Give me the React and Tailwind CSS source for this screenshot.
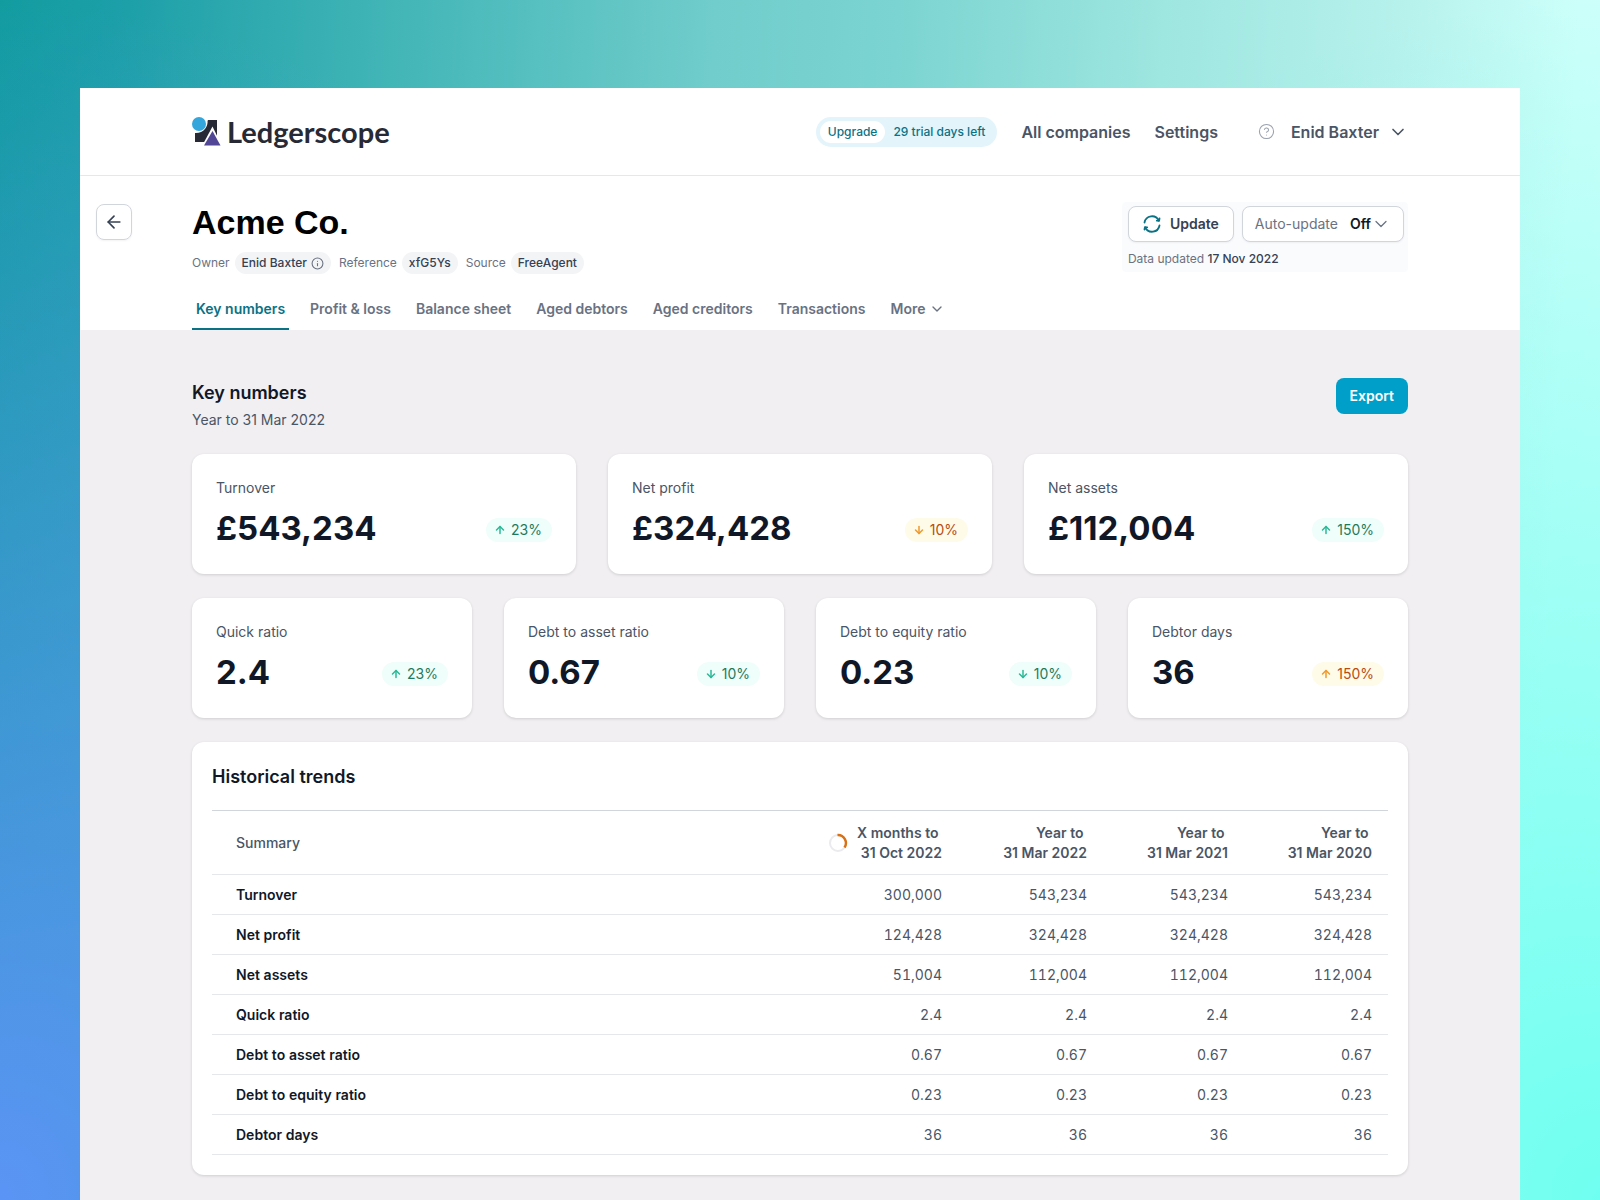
import { ArrowLeft, ArrowUp, ArrowDown, ChevronDown, CircleHelp, Info } from 'lucide-react';

const tabs = ['Key numbers', 'Profit & loss', 'Balance sheet', 'Aged debtors', 'Aged creditors', 'Transactions'];

const mainStats = [
  { label: 'Turnover', value: '£543,234', change: '23%', up: true, good: true },
  { label: 'Net profit', value: '£324,428', change: '10%', up: false, good: false },
  { label: 'Net assets', value: '£112,004', change: '150%', up: true, good: true },
];

const ratioStats = [
  { label: 'Quick ratio', value: '2.4', change: '23%', up: true, good: true },
  { label: 'Debt to asset ratio', value: '0.67', change: '10%', up: false, good: true },
  { label: 'Debt to equity ratio', value: '0.23', change: '10%', up: false, good: true },
  { label: 'Debtor days', value: '36', change: '150%', up: true, good: false },
];

const periods = [
  { date: '31 Mar 2022', width: 'w-[145px]' },
  { date: '31 Mar 2021', width: 'w-[141px]' },
  { date: '31 Mar 2020', width: 'w-40' },
];

const rows = [
  ['Turnover', '300,000', '543,234', '543,234', '543,234'],
  ['Net profit', '124,428', '324,428', '324,428', '324,428'],
  ['Net assets', '51,004', '112,004', '112,004', '112,004'],
  ['Quick ratio', '2.4', '2.4', '2.4', '2.4'],
  ['Debt to asset ratio', '0.67', '0.67', '0.67', '0.67'],
  ['Debt to equity ratio', '0.23', '0.23', '0.23', '0.23'],
  ['Debtor days', '36', '36', '36', '36'],
];

function Logo() {
  return (
    <a href="#" className="flex items-center gap-[6px]">
      <svg width="29" height="30" viewBox="0 0 29 30" aria-hidden="true">
        <path d="M16 3h9v22H3V16z" fill="#272a35" />
        <path d="M2 16C11 17 16.500 10 15.500 3H2z" fill="#fff" />
        <path d="M20.500 9.500 30 29H10z" fill="#fff" />
        <circle cx="7" cy="7" r="7" fill="#35a6dc" />
        <path d="M20.500 14 28.500 28.500h-16.500z" fill="#514796" />
      </svg>
      <span className="font-['Lato',sans-serif] text-[29px] leading-8 font-bold text-[#272a35]">Ledgerscope</span>
    </a>
  );
}

function RefreshIcon() {
  return (
    <svg width="18" height="18" viewBox="0 0 18 18" fill="none" stroke="#0b7285" strokeWidth="1.8" strokeLinecap="round" strokeLinejoin="round" aria-hidden="true">
      <path d="M1.500 7.500A7.600 7.600 0 0 1 15.800 5.500" />
      <path d="M16.500 10.500A7.600 7.600 0 0 1 2.200 12.500" />
      <path d="M13.800 5.600 16.100 5.800 16.500 3.500" />
      <path d="M4.200 12.400 1.900 12.200 1.500 14.500" />
    </svg>
  );
}

function Spinner() {
  return (
    <svg width="20" height="20" viewBox="0 0 20 20" fill="none" strokeWidth="2" aria-hidden="true">
      <circle cx="10" cy="10" r="8" stroke="#ebebee" />
      <path d="M9.500 2A8 8 0 0 1 16.500 14.500" stroke="#d97014" strokeWidth="2.4" />
    </svg>
  );
}

function StatCard({ stat }) {
  const Arrow = stat.up ? ArrowUp : ArrowDown;
  return (
    <div className="rounded-xl bg-white p-6 shadow-[0_1px_3px_rgba(0,0,0,0.14)]">
      <h3 className="text-sm leading-5 text-gray-600">{stat.label}</h3>
      <div className="mt-3 flex items-center justify-between">
        <p className="pb-1 text-[33px] leading-9 font-bold text-gray-900">{stat.value}</p>
        <span
          className={
            stat.good
              ? 'flex h-6 items-center gap-[5px] rounded-full bg-[#effefa] pr-[10px] pl-2 text-sm text-[#1f7a5c]'
              : 'flex h-6 items-center gap-[5px] rounded-full bg-[#fffbe9] pr-[10px] pl-2 text-sm text-[#b84d14]'
          }
        >
          <Arrow size={12} strokeWidth={3} className={stat.good ? 'text-[#2bb997]' : 'text-[#f0992e]'} />
          {stat.change}
        </span>
      </div>
    </div>
  );
}

function MetaItem({ label, children }) {
  return (
    <div className="flex items-center gap-[5px]">
      <dt className="text-gray-500">{label}</dt>
      <dd className="flex h-[22px] items-center gap-1 rounded-full bg-gray-100 px-[7px] font-medium text-gray-700">{children}</dd>
    </div>
  );
}

export default function App() {
  return (
    <div className="min-h-screen bg-[radial-gradient(60%_100%_at_0%_100%,#5b94f5,transparent),radial-gradient(60%_100%_at_100%_100%,#6ffff0,transparent),linear-gradient(93deg,#129ca0_0%,#1c9fa8_7%,#3eb3b5_22%,#70cdcb_43%,#7bd4d1_54%,#9ee6e0_70%,#b6f1ec_84%,#ccfffa_95%,#cffffb_100%)] px-[5%] pt-22 font-['Inter',sans-serif]">
      <div className="min-h-[calc(100vh-88px)] bg-[#f1eff2]">

        {/* Top bar */}
        <header className="border-b border-gray-200 bg-white">
          <div className="mx-auto flex h-[87px] max-w-7xl items-center justify-between px-8">
            <Logo />
            <nav className="flex items-center gap-6 text-base font-semibold text-gray-600">
              <a href="#" className="flex items-center rounded-full bg-[#e3f4fb] p-1 text-xs font-medium text-[#0b7285]">
                <span className="rounded-full bg-white px-2 py-[3px]">Upgrade</span>
                <span className="px-2">29 trial days left</span>
              </a>
              <a href="#">All companies</a>
              <a href="#">Settings</a>
              <div className="ml-4 flex items-center gap-4">
                <button aria-label="Help" className="text-gray-400">
                  <CircleHelp size={17} strokeWidth={1.5} />
                </button>
                <button className="flex items-center gap-[9px]">
                  Enid Baxter
                  <ChevronDown size={20} />
                </button>
              </div>
            </nav>
          </div>
        </header>

        {/* Company heading */}
        <section className="relative bg-white">
          <button aria-label="Back" className="absolute top-7 left-4 flex size-9 items-center justify-center rounded-lg border border-gray-300 text-gray-700 shadow-xs">
            <ArrowLeft size={20} />
          </button>
          <div className="mx-auto max-w-7xl px-8 pt-[26px]">
            <div className="flex items-start justify-between">
              <div>
                <h1 className="font-['Liberation_Sans',sans-serif] text-[34px] leading-10 font-bold text-black">Acme Co.</h1>
                <dl className="mt-[10px] flex items-center gap-2 text-xs">
                  <MetaItem label="Owner">
                    Enid Baxter
                    <Info size={13} className="text-gray-500" />
                  </MetaItem>
                  <MetaItem label="Reference">xfG5Ys</MetaItem>
                  <MetaItem label="Source">FreeAgent</MetaItem>
                </dl>
              </div>

              <div className="rounded bg-[#fafbfc] pt-1 pr-1 pb-[5px] pl-[6px]">
                <div className="flex gap-2">
                  <button className="flex h-9 items-center gap-[9px] rounded-lg border border-gray-300 bg-white px-[14px] text-sm font-semibold text-gray-700 shadow-xs">
                    <RefreshIcon />
                    Update
                  </button>
                  <button className="flex h-9 items-center rounded-lg border border-gray-300 bg-white px-3 text-sm text-gray-500 shadow-xs">
                    Auto-update
                    <span className="ml-3 font-semibold text-gray-900">Off</span>
                    <ChevronDown size={20} strokeWidth={1.5} />
                  </button>
                </div>
                <p className="mt-[9px] text-xs text-gray-500">
                  Data updated <span className="font-medium text-gray-700">17 Nov 2022</span>
                </p>
              </div>
            </div>

            <nav className="mt-3 flex gap-[17px] text-sm font-semibold text-gray-500">
              {tabs.map((tab, i) => (
                <a
                  key={tab}
                  href="#"
                  className={
                    i === 0
                      ? 'border-b-2 border-[#0b7285] px-1 pt-[13px] pb-[9px] text-[#0b7285]'
                      : 'border-b-2 border-transparent px-1 pt-[13px] pb-[9px]'
                  }
                >
                  {tab}
                </a>
              ))}
              <button className="flex items-center gap-1 border-b-2 border-transparent px-1 pt-[13px] pb-[9px]">
                More
                <ChevronDown size={16} />
              </button>
            </nav>
          </div>
        </section>

        <main className="mx-auto max-w-7xl px-8 pt-12 pb-6">
          <div className="flex items-start justify-between">
            <div>
              <h2 className="text-lg leading-[30px] font-semibold text-gray-900">Key numbers</h2>
              <p className="mt-[2px] text-sm leading-5 text-gray-600">Year to 31 Mar 2022</p>
            </div>
            <button className="h-9 rounded-lg bg-[#009fc9] px-[14px] text-sm font-semibold text-white">Export</button>
          </div>

          <div className="mt-6 grid grid-cols-3 gap-8">
            {mainStats.map((stat) => (
              <StatCard key={stat.label} stat={stat} />
            ))}
          </div>
          <div className="mt-6 grid grid-cols-4 gap-8">
            {ratioStats.map((stat) => (
              <StatCard key={stat.label} stat={stat} />
            ))}
          </div>

          {/* Trends */}
          <section className="mt-6 rounded-xl bg-white p-5 shadow-[0_1px_3px_rgba(0,0,0,0.14)]">
            <h2 className="text-lg leading-[30px] font-semibold text-gray-900">Historical trends</h2>
            <table className="mt-[18px] w-full border-t border-gray-300 text-sm leading-5">
              <thead>
                <tr className="border-b border-gray-200 text-right text-gray-600">
                  <th className="pt-3 pb-[11px] pl-6 text-left font-medium">Summary</th>
                  <th className="w-[158px] font-semibold">
                    <div className="flex items-center justify-end gap-[9px]">
                      <Spinner />
                      <span>X months to&nbsp;<br />31 Oct 2022</span>
                    </div>
                  </th>
                  {periods.map((period) => (
                    <th key={period.date} className={`${period.width} pt-3 pb-[11px] font-semibold last:pr-4`}>
                      Year to&nbsp;<br />{period.date}
                    </th>
                  ))}
                </tr>
              </thead>
              <tbody>
                {rows.map(([name, ...values]) => (
                  <tr key={name} className="border-b border-gray-200 text-right text-gray-600 tabular-nums">
                    <th className="h-10 pl-6 text-left font-semibold text-gray-900">{name}</th>
                    {values.map((value, i) => (
                      <td key={i} className="last:pr-4">{value}</td>
                    ))}
                  </tr>
                ))}
              </tbody>
            </table>
          </section>
        </main>
      </div>
    </div>
  );
}
